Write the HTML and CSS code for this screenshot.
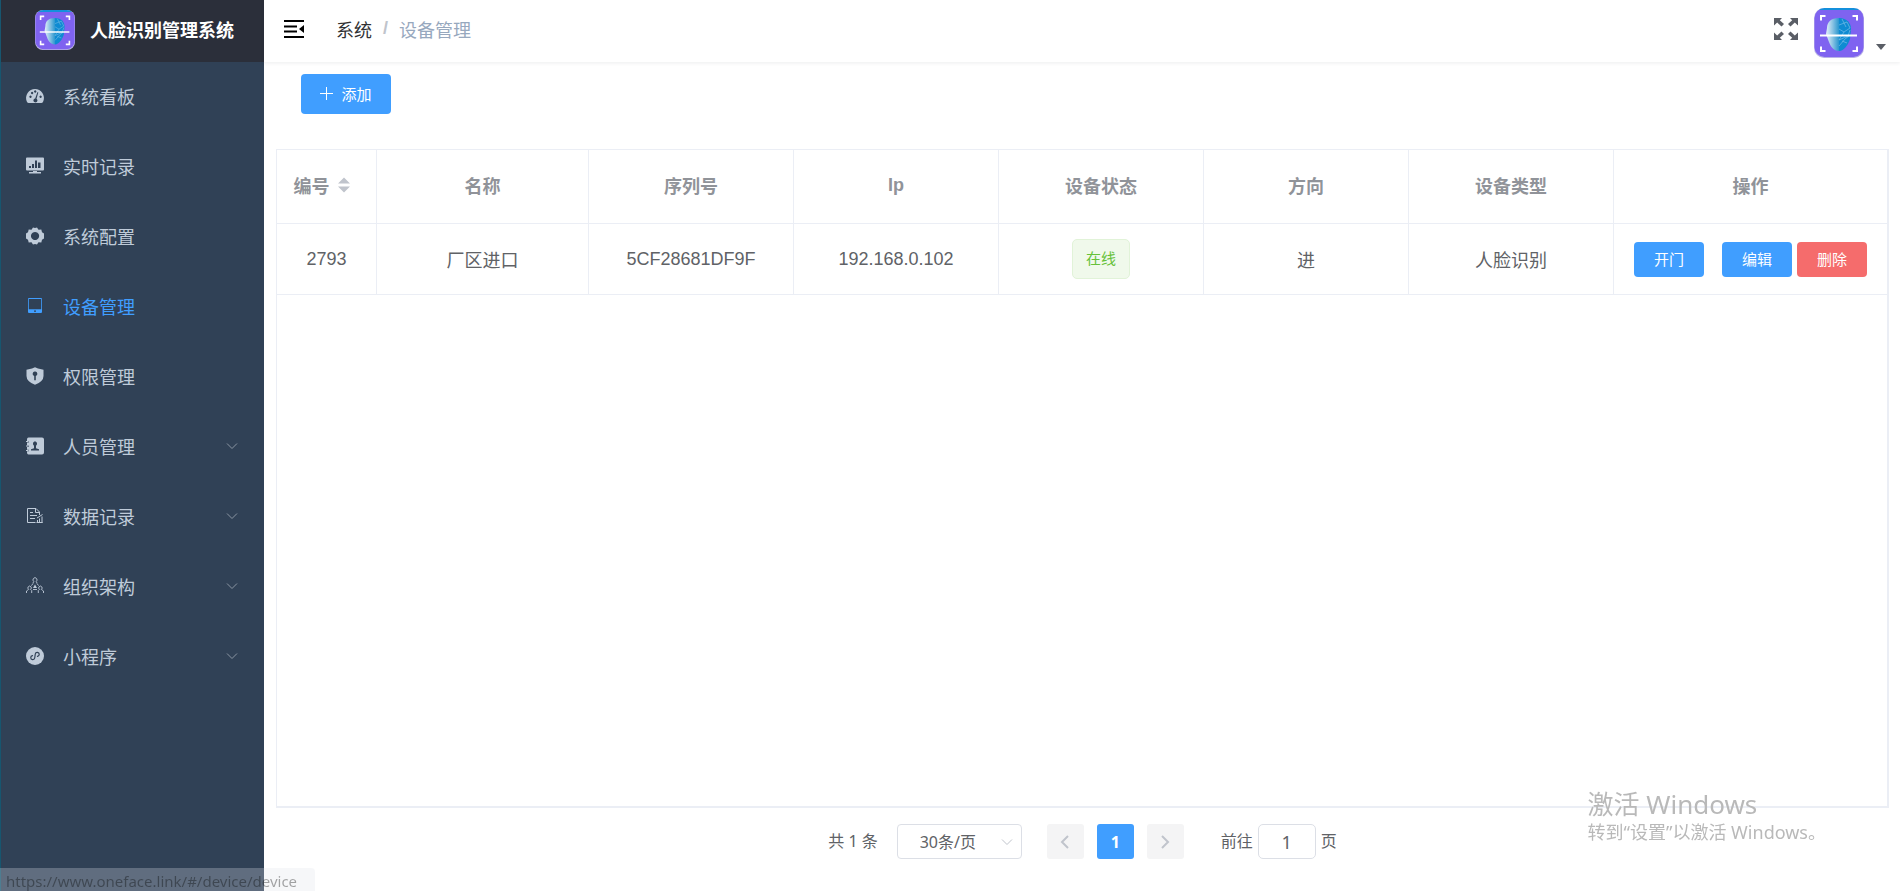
FILE: index.html
```html
<!DOCTYPE html>
<html lang="zh-CN">
<head>
<meta charset="utf-8">
<title>人脸识别管理系统</title>
<link rel="stylesheet" href="styles.css">
</head>
<body>
<svg class="defs" aria-hidden="true">
  <defs>
    <linearGradient id="face-light" x1="0" x2="1" y1="0" y2="0">
      <stop offset="0" stop-color="#e4f1fa"/><stop offset="0.5" stop-color="#8cc4e4"/><stop offset="1" stop-color="#2a97cf"/>
    </linearGradient>
    <linearGradient id="logo-bg" x1="0" x2="0" y1="0" y2="1">
      <stop offset="0" stop-color="#1490dc"/><stop offset="0.04" stop-color="#1490dc"/><stop offset="0.05" stop-color="#7f63f0"/><stop offset="1" stop-color="#7f63f0"/>
    </linearGradient>
    <symbol id="logo" viewBox="0 0 50 50">
      <rect width="50" height="50" rx="10" fill="#b9b3e6"/>
      <rect x="0.5" width="49" height="49" rx="10" fill="url(#logo-bg)"/>
      <path d="M25 10C17 10 13 14 13 20L12 26L15 34C17 40 21 43 25 43Z" fill="url(#face-light)"/>
      <path d="M25 10C33 10 37 15 37 21L36 31C34 37 30 43 25 43Z" fill="#0e8bd2"/>
      <path d="M25 17l8-3 3 6-6 4-5-3M30 24l-5 8 9-4 2-6M25 38l6-7 4-3M28 33l5 2M28 11l4 8" fill="none" stroke="#76bce6" stroke-width="0.7"/>
      <path d="M7 12.500V8h4.500M38.500 8H43v4.500M7 38.500V43h4.500M38.500 43H43v-4.500" fill="none" stroke="#fff" stroke-width="2"/>
      <path d="M6 27.500h37" stroke="#fff" stroke-width="1.8"/>
    </symbol>
    <symbol id="chevron-down" viewBox="0 0 12 12"><path d="M1 3.500l5 5 5-5" fill="none" stroke="currentColor"/></symbol>
  </defs>
</svg>
<div class="app">
  <aside class="sidebar">
    <div class="brand">
      <svg class="brand-logo"><use href="#logo"/></svg>
      <h1 class="brand-title">人脸识别管理系统</h1>
    </div>
    <nav class="menu">
      <a class="menu-item" href="#/dashboard">
        <svg class="menu-icon" viewBox="0 0 18 18"><path fill-rule="evenodd" d="M9 2a9 9 0 0 0-8.300 12.300Q1.100 16 2.500 16h13q1.400 0 1.800-1.700A9 9 0 0 0 9 2ZM3.300 9.700a1.200 1.200 0 1 1 0 .1ZM4.900 6a1.200 1.200 0 1 1 0 .1ZM8 4.400a1.200 1.200 0 1 1 0 .1ZM13.400 9.700a1.200 1.200 0 1 1 0 .1ZM11.500 5.100l.8.3-1.800 6.300a2 2 0 1 1-1.300-.3Z" fill="currentColor"/></svg>
        <span>系统看板</span>
      </a>
      <a class="menu-item" href="#/realtime">
        <svg class="menu-icon" viewBox="0 0 18 18"><path fill-rule="evenodd" d="M1 .5h16q1 0 1 1v11q0 1-1 1H1q-1 0-1-1v-11q0-1 1-1ZM3 9v2h2V9ZM6 7v4h2V7ZM9 3.500V11h2V3.500ZM12 5.500V11h2.500V5.500ZM7 14h4v1h4v1.600H3V15h4Z" fill="currentColor"/></svg>
        <span>实时记录</span>
      </a>
      <a class="menu-item" href="#/config">
        <svg class="menu-icon" viewBox="0 0 18 18"><path fill-rule="evenodd" d="M7 .5 9 1l2-.5 1.500 2.300 2.800-.2.700 2.600 2 1.300v5l-2 1.300-.7 2.700-2.800-.2L11 17.500 9 17l-2 .5-1.500-2.200-2.800.2-.7-2.700-2-1.300v-5l2-1.300.7-2.600 2.800.2ZM9 4.900a4.100 4.100 0 1 0 .1 0Z" fill="currentColor"/></svg>
        <span>系统配置</span>
      </a>
      <a class="menu-item menu-item-active" href="#/device/device" aria-current="page">
        <svg class="menu-icon" viewBox="0 0 18 18"><path fill-rule="evenodd" d="M3 1h12q1 0 1 1v13q0 1-1 1H3q-1 0-1-1V2q0-1 1-1ZM2.800 2v10.300h12.400V2ZM8 13.500v1.300h2v-1.300Z" fill="currentColor"/></svg>
        <span>设备管理</span>
      </a>
      <a class="menu-item" href="#/permission">
        <svg class="menu-icon" viewBox="0 0 18 18"><path fill-rule="evenodd" d="M9 .2 12 1.500l5.500 1.200V9q0 5.500-8.500 8.800Q.5 14.500.5 9V2.700L6 1.500ZM9 4.600a2.200 2.200 0 0 0-.8 4.300v4.300h1.600V8.900A2.200 2.200 0 0 0 9 4.600Z" fill="currentColor"/></svg>
        <span>权限管理</span>
      </a>
      <a class="menu-item" href="#/person">
        <svg class="menu-icon" viewBox="0 0 18 18"><path fill-rule="evenodd" d="M2.500.5H16q2 0 2 2v13q0 2-2 2H2.500q-1.500 0-1.500-2v-1.300h1.800v-1.400H1V9.900h1.800V8.500H1V5.400h1.800V4H1V2.500Q1 .5 2.500.5ZM9 4.200a2.500 2.500 0 0 0-1 4.500v2.600L5 12.200v1.300h8v-1.300l-3-.9V8.700a2.500 2.500 0 0 0-1-4.500Z" fill="currentColor"/><path d="M0 4.500h2.500M0 9h2.500M0 13.500h2.500" stroke="currentColor"/></svg>
        <span>人员管理</span>
        <svg class="menu-arrow"><use href="#chevron-down"/></svg>
      </a>
      <a class="menu-item" href="#/data">
        <svg class="menu-icon" viewBox="0 0 18 18" fill="none" stroke="currentColor"><path d="M9.500 15.500h-8v-14h8.500l3.500 3.500v3M9.500 1.500v4h4M4 5.500h3M4 8.500h7M4 11.500h5M11.500 16v-3M13.500 16v-4.500M16 16V9.500M10.500 15.500h6M11 11l5.500-3.500"/></svg>
        <span>数据记录</span>
        <svg class="menu-arrow"><use href="#chevron-down"/></svg>
      </a>
      <a class="menu-item" href="#/organization">
        <svg class="menu-icon" viewBox="0 0 18 18" fill="none" stroke="currentColor" stroke-width="0.9"><path d="M7.200 6.500V5.200L8 4.500A2 2 0 1 1 10 4.500l.8.700v1.300M2.700 12.300a1.700 1.700 0 1 1 1.800 0L5.700 13.500V16M2.700 12.300L.5 14v2M13.500 12.300a1.700 1.700 0 1 1 1.800 0L17.500 14v2M13.500 12.300L12.300 13.500V16M5.200 8.500 7 6.800M12.800 8.500 11 6.800M7 12.500h4"/><path d="M9 7.500l2 3.500H7Z" fill="currentColor" stroke="none"/></svg>
        <span>组织架构</span>
        <svg class="menu-arrow"><use href="#chevron-down"/></svg>
      </a>
      <a class="menu-item" href="#/miniapp">
        <svg class="menu-icon" viewBox="0 0 18 18"><circle cx="9" cy="9" r="9" fill="currentColor"/><path d="M6.500 9a2 2 0 1 0 2.500 2V7a2 2 0 1 1 2.500 2" fill="none" stroke="#304156" stroke-width="1.200" stroke-linecap="round" transform="rotate(8 9 9)"/></svg>
        <span>小程序</span>
        <svg class="menu-arrow"><use href="#chevron-down"/></svg>
      </a>
    </nav>
  </aside>

  <div class="main">
    <header class="navbar">
      <button class="icon-button" type="button" aria-label="收起菜单">
        <svg class="fold-icon" viewBox="0 0 20 18"><path d="M0 1h20M0 6.500h13M0 11.500h13M0 17h20" stroke="#000" stroke-width="1.800"/><path d="M20 5v8l-5-4Z"/></svg>
      </button>
      <nav class="breadcrumb" aria-label="breadcrumb">
        <a class="crumb-link" href="#/">系统</a>
        <span class="crumb-separator">/</span>
        <span class="crumb-current">设备管理</span>
      </nav>
      <div class="navbar-right">
        <button class="icon-button" type="button" aria-label="全屏">
          <svg class="fullscreen-icon" viewBox="0 0 24 24"><g fill="#5a5e66"><path d="M0 1H8L5.800 3.200 10 7 7.500 9.600 3.200 5.600 0 8.500Z"/><path d="M24 1H16L18.200 3.200 14 7 16.500 9.600 20.800 5.600 24 8.500Z"/><path d="M0 23H8L5.800 20.800 10 17 7.500 14.400 3.200 18.400 0 15.500Z"/><path d="M24 23H16L18.200 20.800 14 17 16.500 14.400 20.800 18.400 24 15.500Z"/></g></svg>
        </button>
        <button class="icon-button avatar-button" type="button" aria-label="用户菜单">
          <svg class="avatar"><use href="#logo"/></svg>
          <svg class="caret" viewBox="0 0 10 6"><path d="M0 0h10L5 6Z" fill="#5a5e66"/></svg>
        </button>
      </div>
    </header>

    <main class="content">
      <div class="toolbar">
        <button class="button button-add" type="button">
          <svg class="plus-icon" viewBox="0 0 13 13"><path d="M6.500 0v13M0 6.500h13" stroke="currentColor"/></svg>
          <span>添加</span>
        </button>
      </div>

      <div class="table-box">
        <table class="table">
          <colgroup>
            <col class="col-id"><col class="col-name"><col><col><col><col><col><col class="col-actions">
          </colgroup>
          <thead>
            <tr>
              <th class="cell-sortable" scope="col"><span class="sortable">编号<svg class="sort-icon" viewBox="0 0 12 16"><path d="M0 6.500 6 .5l6 6ZM0 9.500h12l-6 6Z" fill="#c0c4cc"/></svg></span></th>
              <th scope="col">名称</th>
              <th scope="col">序列号</th>
              <th scope="col">Ip</th>
              <th scope="col">设备状态</th>
              <th scope="col">方向</th>
              <th scope="col">设备类型</th>
              <th scope="col">操作</th>
            </tr>
          </thead>
          <tbody>
            <tr>
              <td>2793</td>
              <td>厂区进口</td>
              <td>5CF28681DF9F</td>
              <td>192.168.0.102</td>
              <td><span class="tag">在线</span></td>
              <td>进</td>
              <td>人脸识别</td>
              <td>
                <div class="actions">
                  <button class="button button-open" type="button">开门</button>
                  <button class="button" type="button">编辑</button>
                  <button class="button button-danger" type="button">删除</button>
                </div>
              </td>
            </tr>
          </tbody>
        </table>
      </div>

      <div class="pagination">
        <span class="total">共 1 条</span>
        <div class="page-size">
          <select class="page-select" aria-label="每页条数"><option>30条/页</option></select>
          <svg class="select-arrow"><use href="#chevron-down"/></svg>
        </div>
        <div class="pager">
          <button class="page-button" type="button" disabled aria-label="上一页"><svg class="page-arrow" viewBox="0 0 12 14"><path d="M9 1 3 7l6 6" fill="none" stroke="currentColor" stroke-width="2"/></svg></button>
          <button class="page-button page-button-active" type="button" aria-current="page">1</button>
          <button class="page-button" type="button" disabled aria-label="下一页"><svg class="page-arrow" viewBox="0 0 12 14"><path d="m3 1 6 6-6 6" fill="none" stroke="currentColor" stroke-width="2"/></svg></button>
        </div>
        <div class="jump">
          <label for="jump-page">前往</label>
          <input class="jump-input" id="jump-page" type="text" value="1">
          <span>页</span>
        </div>
      </div>
    </main>
  </div>
</div>

<div class="watermark">
  <p class="watermark-title">激活 Windows</p>
  <p class="watermark-text">转到“设置”以激活 Windows。</p>
</div>
<div class="status-bar">https://www.oneface.link/#/device/device</div>
</body>
</html>
```

FILE: styles.css
```css
* {
  box-sizing: border-box;
}

body {
  margin: 0;
  color: #606266;
  background: #fff;
  font-family: "Liberation Sans", "Noto Sans CJK SC", sans-serif;
  font-size: 18px;
}

button,
input,
select {
  margin: 0;
  font-family: inherit;
}

.defs {
  position: absolute;
  width: 0;
  height: 0;
}

.app {
  display: flex;
  min-height: 100vh;
}

/* Sidebar */
.sidebar {
  flex: 0 0 264px;
  border-left: 1px solid #17566f;
  background: #304156;
}

.brand {
  display: flex;
  align-items: center;
  gap: 15px;
  height: 62px;
  padding: 0 0 2px 34px;
  background: #2b2f3a;
}

.brand-logo {
  width: 40px;
  height: 40px;
}

.brand-title {
  margin: 0;
  padding-bottom: 2px;
  color: #fff;
  font-size: 18px;
  font-weight: 700;
}

.menu-item {
  display: flex;
  align-items: center;
  height: 70px;
  padding: 0 26px 2px 25px;
  color: #bfcbd9;
  text-decoration: none;
}

.menu-item-active {
  color: #409eff;
}

.menu-icon {
  width: 18px;
  height: 18px;
  margin-right: 19px;
}

.menu-arrow {
  width: 12px;
  height: 12px;
  margin-left: auto;
  color: #8b96a3;
}

/* Top bar */
.main {
  display: flex;
  flex: 1;
  flex-direction: column;
  min-width: 0;
}

.navbar {
  display: flex;
  align-items: center;
  height: 62px;
  padding: 0 14px 0 20px;
  box-shadow: 0 1px 4px rgba(0, 21, 41, 0.08);
}

.icon-button {
  display: flex;
  padding: 0;
  border: 0;
  background: none;
}

.fold-icon {
  width: 20px;
  height: 18px;
  margin-bottom: 4px;
}

.breadcrumb {
  display: flex;
  align-items: center;
  gap: 11px;
  margin-left: 32px;
  padding-bottom: 5px;
}

.crumb-link {
  color: #303133;
  text-decoration: none;
}

.crumb-separator {
  color: #c0c4cc;
  font-weight: 700;
}

.crumb-current {
  color: #97a8be;
}

.navbar-right {
  display: flex;
  align-items: center;
  gap: 16px;
  margin-left: auto;
}

.fullscreen-icon {
  width: 24px;
  height: 24px;
  margin-bottom: 4px;
}

.avatar-button {
  align-items: flex-end;
  gap: 12px;
}

.avatar {
  width: 50px;
  height: 50px;
  margin-top: 4px;
}

.caret {
  width: 10px;
  height: 6px;
  margin-bottom: 8px;
}

/* Content */
.content {
  display: flex;
  flex: 1;
  flex-direction: column;
  padding: 12px 11px 32px 12px;
}

.toolbar {
  padding: 0 25px 35px;
}

.button {
  width: 70px;
  height: 35px;
  padding: 0 0 2px;
  border: 0;
  border-radius: 4px;
  color: #fff;
  background: #409eff;
  font-size: 15px;
}

.button-add {
  display: flex;
  align-items: center;
  justify-content: center;
  gap: 8px;
  width: 90px;
  height: 40px;
}

.button-danger {
  background: #f56c6c;
}

.plus-icon {
  width: 13px;
  height: 13px;
}

.table-box {
  flex: 1;
  border: solid #ebeef5;
  border-width: 1px 2px 2px 1px;
}

.table {
  width: 100%;
  border-collapse: separate;
  border-spacing: 0;
  table-layout: fixed;
  text-align: center;
}

.table th,
.table td {
  padding: 0;
  border-right: 1px solid #ebeef5;
  border-bottom: 1px solid #ebeef5;
}

.table th:last-child,
.table td:last-child {
  border-right: 0;
}

.table th {
  height: 74px;
  padding-bottom: 3px;
  color: #909399;
  font-weight: 700;
}

.table .cell-sortable {
  padding-right: 10px;
}

.table td {
  height: 71px;
}

.col-id {
  width: 100px;
}

.col-name {
  width: 212px;
}

.col-actions {
  width: 273px;
}

.sortable {
  display: inline-flex;
  align-items: center;
  gap: 8px;
}

.sort-icon {
  width: 12px;
  height: 16px;
}

.tag {
  display: inline-block;
  height: 40px;
  padding: 0 13px;
  border: 1px solid #e1f3d8;
  border-radius: 5px;
  color: #67c23a;
  background: #f0f9eb;
  font-size: 15px;
  line-height: 38px;
  vertical-align: middle;
}

.actions {
  display: flex;
  justify-content: center;
  gap: 5px;
}

.button-open {
  margin-right: 13px;
}

/* Pagination */
.pagination {
  display: flex;
  align-items: center;
  justify-content: center;
  padding-top: 16px;
  font-family: "Noto Sans", "Noto Sans CJK SC", sans-serif;
  font-size: 16px;
  line-height: 35px;
}

.page-size {
  position: relative;
  margin: 0 25px 0 19px;
}

.page-select {
  display: block;
  width: 125px;
  height: 35px;
  padding: 0 22px;
  border: 1px solid #dcdfe6;
  border-radius: 4px;
  appearance: none;
  color: #606266;
  background: #fff;
  font-size: 16px;
}

.select-arrow {
  position: absolute;
  top: 12px;
  right: 9px;
  width: 12px;
  height: 12px;
  color: #c0c4cc;
  pointer-events: none;
}

.pager {
  display: flex;
  gap: 13px;
}

.page-button {
  display: flex;
  align-items: center;
  justify-content: center;
  width: 37px;
  height: 35px;
  padding: 0;
  border: 0;
  border-radius: 3px;
  color: #c0c4cc;
  background: #f4f4f5;
  font-size: 16px;
  font-weight: 700;
}

.page-button-active {
  color: #fff;
  background: #409eff;
}

.page-arrow {
  width: 12px;
  height: 14px;
}

.jump {
  display: flex;
  gap: 5px;
  margin-left: 37px;
}

.jump-input {
  width: 58px;
  height: 35px;
  padding: 0;
  border: 1px solid #dcdfe6;
  border-radius: 5px;
  color: #606266;
  font-size: 18px;
  text-align: center;
}

/* Overlays */
.watermark {
  position: fixed;
  right: 74px;
  bottom: 46px;
  color: #b9b9b9;
  font-family: "Noto Sans", "Noto Sans CJK SC", sans-serif;
  pointer-events: none;
}

.watermark p {
  margin: 0;
}

.watermark-title {
  font-size: 26px;
  line-height: 30px;
}

.watermark-text {
  font-size: 18px;
  line-height: 26px;
}

.status-bar {
  position: fixed;
  bottom: 0;
  left: 0;
  height: 23px;
  padding: 0 18px 0 6px;
  border-top-right-radius: 4px;
  color: rgba(0, 0, 0, 0.35);
  background: rgba(222, 225, 234, 0.28);
  font-family: "Noto Sans", sans-serif;
  font-size: 15px;
  line-height: 26px;
}
```
